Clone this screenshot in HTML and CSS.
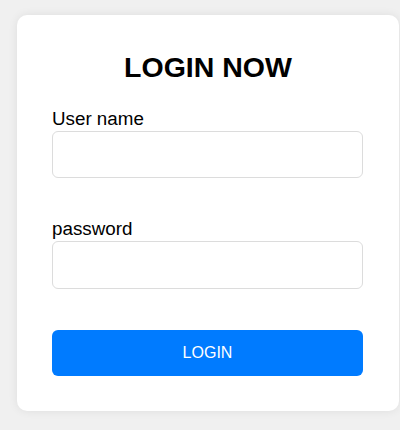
FILE: index.html
```html
<!DOCTYPE html>
<html lang="en">
<head>
<meta charset="utf-8">
<title>Login</title>
<link rel="stylesheet" href="styles.css">
</head>
<body>
<div class="card">
  <h1 class="title">LOGIN NOW</h1>
  <form class="form">
    <div class="group">
      <label class="label" for="user">User name</label>
      <input class="input" id="user" type="text">
    </div>
    <div class="group">
      <label class="label" for="pass">password</label>
      <input class="input" id="pass" type="password">
    </div>
    <button class="btn" type="button">LOGIN</button>
  </form>
</div>
</body>
</html>
```
FILE: styles.css
```css
* { box-sizing: border-box; }
html, body {
  margin: 0;
  padding: 0;
  background: #f0f0f0;
  font-family: "Liberation Sans", Arial, sans-serif;
  color: #000;
}
body {
  padding: 15px 0 0 17px;
  height: 430px;
  overflow: hidden;
}
.card {
  width: 382px;
  background: #fff;
  border-radius: 10px;
  box-shadow: 0 0 10px rgba(0, 0, 0, 0.08);
  padding: 36px 35px 35px 35px;
}
.title {
  margin: 0 0 27px 0;
  font-size: 28.5px;
  line-height: 32px;
  font-weight: bold;
  text-align: center;
}
.form {
  display: flex;
  flex-direction: column;
}
.group {
  display: flex;
  flex-direction: column;
  margin-bottom: 42px;
}
.group + .group {
  margin-bottom: 41px;
}
.label {
  font-size: 18.8px;
  line-height: 18px;
  margin-bottom: 3px;
}
.input {
  width: 311px;
  height: 47px;
  border: 1px solid #dcdcdc;
  border-radius: 6px;
  background: #fff;
  font-size: 16px;
  padding: 0 10px;
  outline: none;
}
.group + .group .input {
  height: 48px;
}
.btn {
  width: 311px;
  height: 46px;
  border: none;
  border-radius: 6px;
  background: #007bff;
  color: #fff;
  font-family: "Liberation Sans", Arial, sans-serif;
  font-size: 16px;
  cursor: pointer;
}
```
